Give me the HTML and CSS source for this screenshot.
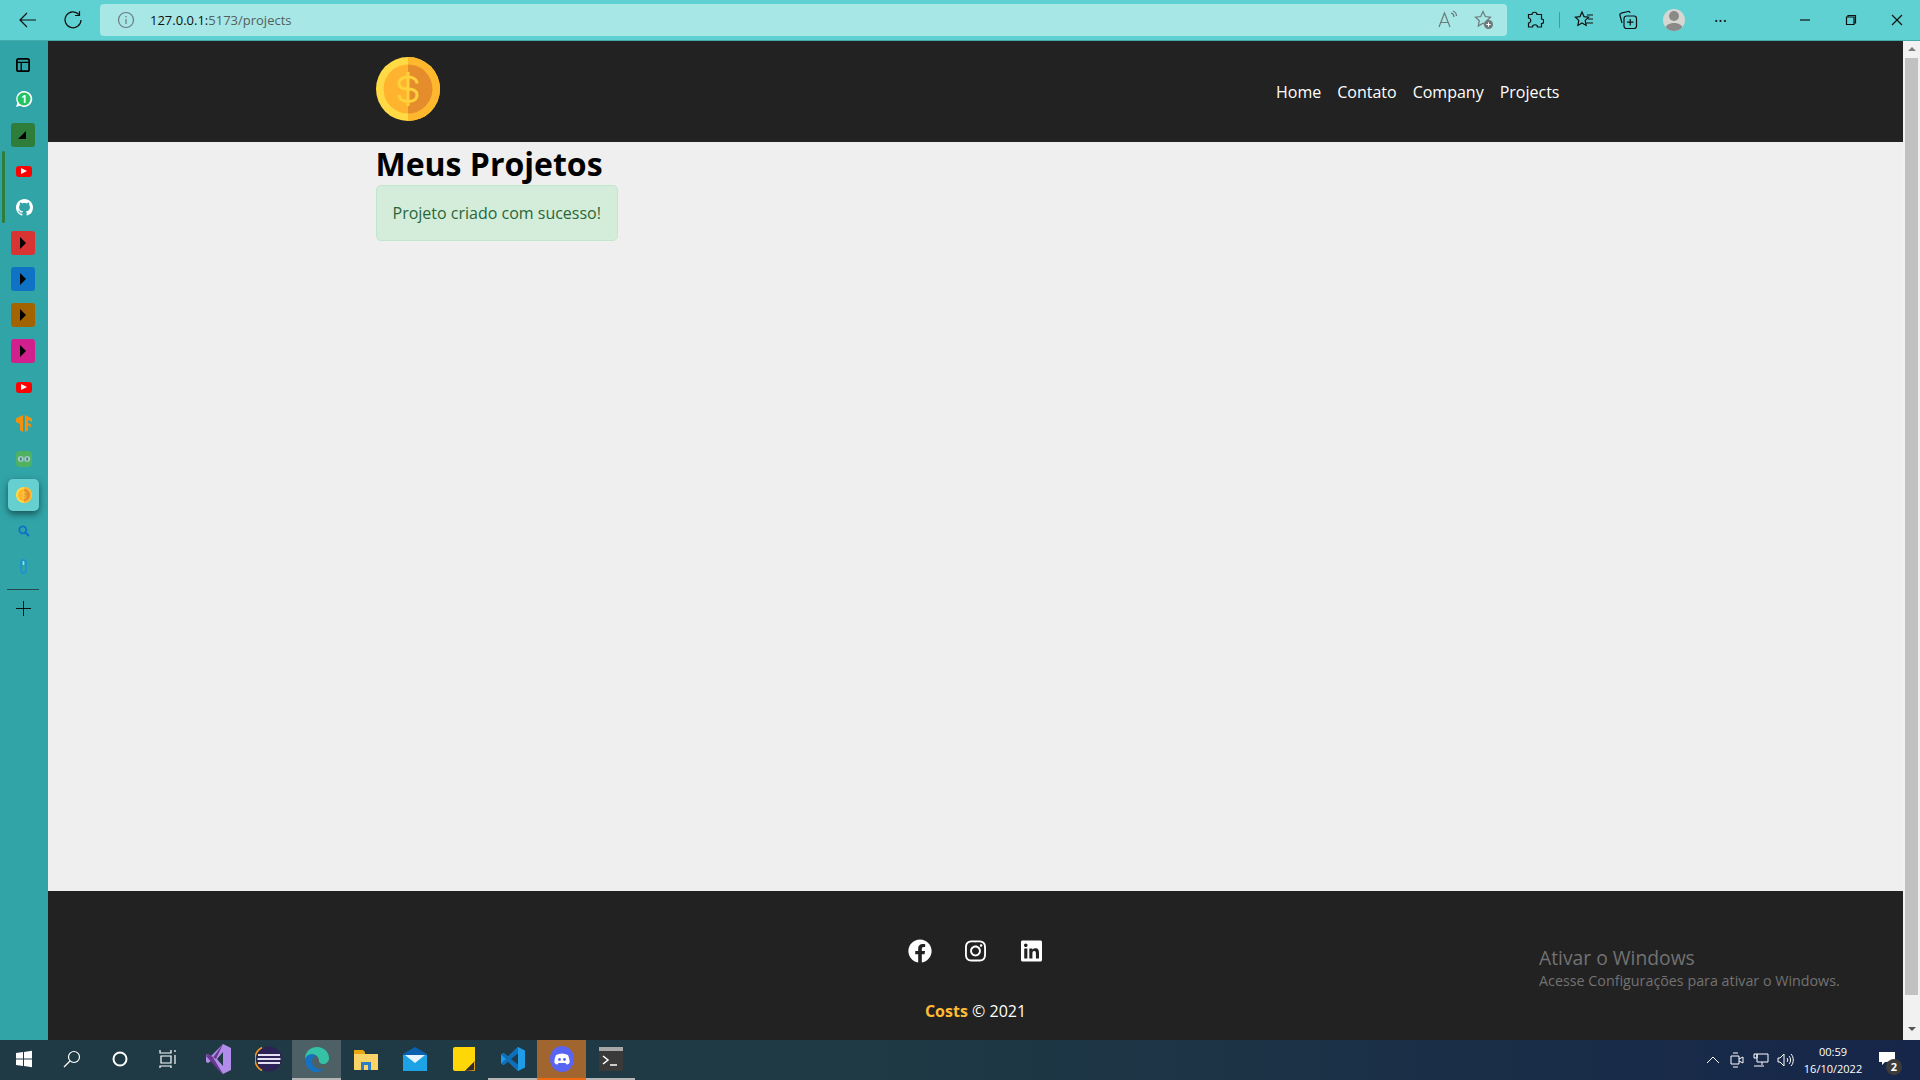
FILE: index.html
```html
<!DOCTYPE html>
<html lang="pt-BR">
<head>
    <meta charset="UTF-8" />
    <title>Costs</title>
    <link rel="stylesheet" href="styles.css">
</head>
<body>
    <div class="toolbar">
        <span class="tb-btn back"><svg width="20" height="20" viewBox="0 0 20 20"><path d="M18 10H2M9 3l-7 7 7 7" class="ln"/></svg></span>
        <span class="tb-btn reload"><svg width="20" height="20" viewBox="0 0 20 20"><path d="M16 4.500A8 8 0 1 0 18 10M16.500 1v4.500H12" class="ln"/></svg></span>
        <div class="address">
            <svg class="info" width="18" height="18" viewBox="0 0 18 18"><circle cx="9" cy="9" r="7.500" class="ln-g"/><path d="M9 8v5M9 5v1.500" class="ln-g"/></svg>
            <span class="url"><span class="host">127.0.0.1:</span>5173/projects</span>
            <span class="addr-end">
                <svg width="20" height="20" viewBox="0 0 20 20"><path d="M1 17L6.500 3 12 17M3 12.500h7M13 3c2 .5 3 2 3 4M15 1c2.500 1 3.500 3 3.500 5" class="ln-g"/></svg>
                <svg width="20" height="20" viewBox="0 0 20 20"><path d="M9 1.500l2.300 5 5.200.6-3.800 3.600 1 5.300L9 13.300 4.300 16l1-5.300L1.500 7.100l5.200-.6z" class="ln-g"/><circle cx="14.500" cy="14.500" r="4.500" fill="#6d7a7b"/><path d="M14.500 12.300v4.400M12.300 14.500h4.400" stroke="#fff" fill="none"/></svg>
            </span>
        </div>
        <div class="tb-right">
            <span class="tb-slot s-ext"><svg width="18" height="18" viewBox="0 0 18 18"><path d="M6 3.500C6 .5 11 .5 11 3.500h4.500V8c3 0 3 4.500 0 4.500V16h-4c0-3-5-3-5 0H2.500v-4c3 0 3-5 0-5V3.500z" class="ln"/></svg></span>
            <span class="tb-sep"></span>
            <span class="tb-slot s-fav"><svg width="20" height="20" viewBox="0 0 20 20"><path d="M8 2l2 4.600 4.600.5-3.400 3.300.9 5L8 13l-4.100 2.400.9-5L1.400 7.100 6 6.600zM13 5h6M14 9h5M12 13h7" class="ln"/></svg></span>
            <span class="tb-slot s-coll"><svg width="20" height="20" viewBox="0 0 20 20"><path d="M4 13L2 5.500c-.3-1 .2-2 1.200-2.300L10 1.500c1-.2 1.800.3 2.200 1.200" class="ln"/><rect x="6" y="6" width="12.500" height="12.500" rx="2.500" class="ln"/><path d="M12.200 9v6.500M9 12.200h6.500" class="ln"/></svg></span>
            <span class="avatar"><svg width="22" height="22" viewBox="0 0 22 22"><circle cx="11" cy="7" r="5" fill="#8a8a88"/><path d="M2 22c0-6 4-8 9-8s9 2 9 8z" fill="#8a8a88"/></svg></span>
            <span class="tb-slot s-more">•••</span>
            <span class="win-btn s-min"><svg width="12" height="12" viewBox="0 0 12 12"><path d="M1 6h10" class="ln"/></svg></span>
            <span class="win-btn s-max"><svg width="12" height="12" viewBox="0 0 12 12"><path d="M3 3V1.500h7.500V9H9M1.500 3H9v7.500H1.500z" class="ln"/></svg></span>
            <span class="win-btn s-close"><svg width="12" height="12" viewBox="0 0 12 12"><path d="M1 1l10 10M11 1L1 11" class="ln"/></svg></span>
        </div>
    </div>

    <div class="middle">
        <aside class="sidebar">
            <span class="active-bar"></span>
            <div class="side-item nudge first"><svg width="14" height="14" viewBox="0 0 16 16"><rect x="1" y="1" width="14" height="14" rx="2" fill="none" stroke="#000" stroke-width="2"/><path d="M1 5h14M6 5v10" stroke="#000" stroke-width="1.500"/></svg></div>
            <div class="side-item"><svg width="18" height="18" viewBox="0 0 18 18"><path d="M1 17l1.300-4A8 8 0 1 1 5 15.800z" fill="#fff"/><circle cx="9" cy="9" r="6.500" fill="#25c35f"/><text x="9" y="12.500" class="wa-num">1</text></svg></div>
            <div class="side-item nudge"><span class="tile green"><svg width="10" height="10" viewBox="0 0 10 10"><path d="M0 9L8 1v8z"/></svg></span></div>
            <div class="side-item"><span class="yt"><svg width="6" height="6" viewBox="0 0 6 6"><path d="M0 0l6 3-6 3z" fill="#fff"/></svg></span></div>
            <div class="side-item"><svg width="17" height="17" viewBox="0 0 16 16"><path fill="#fff" d="M8 0C3.580 0 0 3.580 0 8c0 3.540 2.290 6.530 5.470 7.590.4.070.55-.17.55-.38 0-.19-.01-.82-.01-1.490-2.010.37-2.530-.49-2.690-.94-.09-.23-.48-.94-.82-1.130-.28-.15-.68-.52-.01-.53.630-.01 1.080.58 1.230.82.720 1.210 1.870.870 2.330.660.070-.520.280-.870.510-1.070-1.780-.2-3.640-.89-3.640-3.950 0-.870.310-1.590.820-2.150-.080-.2-.360-1.020.080-2.120 0 0 .670-.210 2.200.820.640-.180 1.320-.270 2-.270s1.360.090 2 .270c1.530-1.040 2.200-.820 2.200-.820.440 1.100.160 1.920.080 2.120.510.560.820 1.270.820 2.150 0 3.070-1.870 3.750-3.650 3.950.290.250.540.730.540 1.480 0 1.070-.010 1.930-.010 2.200 0 .210.150.460.550.380A8.010 8.010 0 0 0 16 8c0-4.420-3.580-8-8-8z"/></svg></div>
            <div class="side-item nudge"><span class="tile red"><svg width="8" height="12" viewBox="0 0 8 12"><path d="M1 0l6 6-6 6z"/></svg></span></div>
            <div class="side-item nudge"><span class="tile blue"><svg width="8" height="12" viewBox="0 0 8 12"><path d="M1 0l6 6-6 6z"/></svg></span></div>
            <div class="side-item nudge"><span class="tile brown"><svg width="8" height="12" viewBox="0 0 8 12"><path d="M1 0l6 6-6 6z"/></svg></span></div>
            <div class="side-item nudge"><span class="tile pink"><svg width="8" height="12" viewBox="0 0 8 12"><path d="M1 0l6 6-6 6z"/></svg></span></div>
            <div class="side-item"><span class="yt"><svg width="6" height="6" viewBox="0 0 6 6"><path d="M0 0l6 3-6 3z" fill="#fff"/></svg></span></div>
            <div class="side-item"><svg width="16" height="17" viewBox="0 0 16 17"><path d="M0 3.500L7 0v17l-3-1.700V9L0 7zM9 0l7 3.500V7l-4-2v3l3 1.500v3L12 10v5.300L9 17z" fill="#f79009"/></svg></div>
            <div class="side-item"><svg width="16" height="16" viewBox="0 0 16 16"><rect width="16" height="16" rx="4" fill="#4eb260"/><circle cx="4.800" cy="8" r="3" fill="#9cc9c4"/><circle cx="11.200" cy="8" r="3" fill="#9cc9c4"/><path d="M4.800 6.500v3M11.200 6.500v3" stroke="#3c6f78" stroke-width="1.400"/></svg></div>
            <div class="side-item"><span class="side-sel">
                <svg width="16" height="16" viewBox="0 0 64 64"><use href="#coin"/></svg>
            </span></div>
            <div class="side-item"><svg width="12" height="12" viewBox="0 0 12 12"><circle cx="4.800" cy="4.800" r="3.500" fill="none" stroke="#1270c4" stroke-width="1.800"/><path d="M7.500 7.500l3.500 3.500" stroke="#1270c4" stroke-width="2"/></svg></div>
            <div class="side-item"><svg width="8" height="16" viewBox="0 0 8 16"><rect x="1" y="1" width="5" height="13" rx="2.500" fill="none" stroke="#1b8fd8" stroke-width="1.500"/><path d="M3.500 2v4" stroke="#9fd8f0" stroke-width="1.500"/></svg></div>
            <span class="side-line"></span>
            <div class="side-plus"><svg width="15" height="15" viewBox="0 0 15 15"><path d="M7.500 0v15M0 7.500h15" stroke="#111" stroke-width="1" fill="none"/></svg></div>
        </aside>

        <div class="page">
            <nav class="navbar">
                <div class="container nav-in">
                    <a class="logo" href="#">
                        <svg width="64" height="64" viewBox="0 0 64 64">
                            <defs>
                                <g id="coin">
                                    <circle cx="32" cy="32" r="32" fill="#ffda44"/>
                                    <path d="M32 0a32 32 0 0 1 0 64z" fill="#ffb82e"/>
                                    <circle cx="32" cy="32" r="24.500" fill="#ffb32e"/>
                                    <path d="M32 7.500a24.500 24.500 0 0 1 0 49z" fill="#e58c2c"/>
                                    <path d="M41 26.500c0-4-4-6.500-9-6.500s-9 2.500-9 6.500 4 5.500 9 5.500 9 1.500 9 6-4 6.500-9 6.500-9-2.500-9-6.500M32 15v34" class="coin-sign"/>
                                </g>
                            </defs>
                            <use href="#coin"/>
                        </svg>
                    </a>
                    <ul class="nav-list">
                        <li><a href="#">Home</a></li>
                        <li><a href="#">Contato</a></li>
                        <li><a href="#">Company</a></li>
                        <li><a href="#">Projects</a></li>
                    </ul>
                </div>
            </nav>
            <main class="content">
                <div class="container">
                    <h1>Meus Projetos</h1>
                    <div class="message">Projeto criado com sucesso!</div>
                </div>
            </main>
            <footer class="footer">
                <ul class="social">
                    <li><svg height="24" viewBox="0 0 512 512"><path d="M504 256C504 119 393 8 256 8S8 119 8 256c0 123.780 90.690 226.380 209.250 245V327.690h-63V256h63v-54.640c0-62.150 37-96.480 93.670-96.480 27.140 0 55.520 4.840 55.520 4.840v61h-31.280c-30.800 0-40.410 19.120-40.410 38.730V256h68.780l-11 71.690h-57.780V501C413.310 482.380 504 379.780 504 256z"/></svg></li>
                    <li><svg height="24" viewBox="0 0 448 512"><path d="M224.100 141c-63.600 0-114.900 51.300-114.900 114.900s51.300 114.900 114.900 114.900S339 319.500 339 255.900 287.700 141 224.100 141zm0 189.600c-41.100 0-74.700-33.500-74.700-74.700s33.500-74.700 74.700-74.700 74.700 33.500 74.700 74.700-33.600 74.700-74.700 74.700zm146.400-194.300c0 14.900-12 26.800-26.800 26.800-14.900 0-26.800-12-26.800-26.800s12-26.800 26.800-26.800 26.800 12 26.800 26.800zm76.100 27.200c-1.700-35.900-9.900-67.700-36.200-93.900-26.200-26.200-58-34.400-93.900-36.200-37-2.100-147.900-2.100-184.900 0-35.800 1.700-67.600 9.900-93.900 36.100s-34.400 58-36.200 93.900c-2.100 37-2.100 147.900 0 184.900 1.700 35.900 9.900 67.700 36.200 93.900s58 34.400 93.900 36.200c37 2.100 147.900 2.100 184.900 0 35.900-1.700 67.700-9.900 93.900-36.200 26.200-26.200 34.400-58 36.200-93.900 2.100-37 2.100-147.800 0-184.800zM398.800 388c-7.800 19.600-22.900 34.700-42.600 42.600-29.500 11.700-99.500 9-132.100 9s-102.700 2.600-132.100-9c-19.600-7.800-34.700-22.900-42.600-42.600-11.700-29.500-9-99.500-9-132.100s-2.600-102.700 9-132.100c7.800-19.600 22.900-34.700 42.600-42.600 29.500-11.700 99.500-9 132.100-9s102.700-2.600 132.100 9c19.600 7.800 34.700 22.900 42.600 42.600 11.700 29.500 9 99.500 9 132.100s2.700 102.700-9 132.100z"/></svg></li>
                    <li><svg height="24" viewBox="0 0 448 512"><path d="M416 32H31.900C14.300 32 0 46.500 0 64.300v383.400C0 465.500 14.300 480 31.900 480H416c17.600 0 32-14.500 32-32.300V64.300c0-17.800-14.400-32.300-32-32.300zM135.400 416H69V202.200h66.500V416zm-33.200-243c-21.300 0-38.500-17.300-38.500-38.500S80.900 96 102.200 96c21.200 0 38.500 17.300 38.500 38.500 0 21.300-17.200 38.500-38.500 38.500zm282.100 243h-66.400V312c0-24.800-.5-56.700-34.500-56.700-34.600 0-39.900 27-39.900 54.900V416h-66.400V202.200h63.700v29.200h.9c8.900-16.800 30.600-34.500 62.900-34.500 67.200 0 79.700 44.300 79.700 101.900V416z"/></svg></li>
                </ul>
                <p class="copy"><span class="brand">Costs</span> &copy; 2021</p>
            </footer>
        </div>

        <div class="scrollbar">
            <span class="arrow-up"></span>
            <span class="thumb"></span>
            <span class="arrow-down"></span>
        </div>

        <div class="watermark">
            <div class="wm-title">Ativar o Windows</div>
            <div class="wm-sub">Acesse Configurações para ativar o Windows.</div>
        </div>
    </div>

    <div class="taskbar">
        <span class="task"><svg width="18" height="18" viewBox="0 0 18 18"><path d="M1 3l7-1v6.500H1zM9 1.900L17 .8v7.700H9zM1 9.500h7V16l-7-1zM9 9.500h8v7.700l-8-1.100z" fill="#fff"/></svg></span>
        <span class="task"><svg width="18" height="18" viewBox="0 0 18 18"><circle cx="11" cy="7" r="5.500" fill="none" stroke="#fff" stroke-width="1.200"/><path d="M7 11l-6 6" stroke="#fff" stroke-width="1.300"/></svg></span>
        <span class="task"><svg width="18" height="18" viewBox="0 0 18 18"><circle cx="9" cy="9" r="6.500" fill="none" stroke="#fff" stroke-width="2"/></svg></span>
        <span class="task"><svg width="18" height="20" viewBox="0 0 18 20"><path d="M1 1v3h11V1M2 7h10v7H2zM1 19v-2h11v2M16 1v2M16 6v9" fill="none" stroke="#fff" stroke-width="1.200"/></svg></span>
        <div class="pinned">
            <span class="task t-pin"><svg width="25" height="30" viewBox="0 0 25 30"><path d="M17 0l8 4v22l-8 4L5 17l-3 2-2-1V11l2-1 3 2z" fill="#b18ce8"/><path d="M17 0L7 13.500 17 30l-2-1L0 12l2-2 8 5z" fill="#68388f"/><path d="M17 8l-6 7 6 7z" fill="#1f3a44"/></svg></span>
            <span class="task t-pin"><svg width="26" height="28" viewBox="0 0 26 28"><circle cx="14" cy="14" r="12.500" fill="#2c2255"/><path d="M7 2.500A13 13 0 0 0 7 25.500" fill="none" stroke="#f7941e" stroke-width="1.500"/><path d="M3 10h22M2.500 14h23M3 18h22" stroke="#e4e0f2" stroke-width="2"/></svg></span>
            <span class="task t-pin t-on"><svg width="26" height="26" viewBox="0 0 26 26"><path d="M1 13C1 5 7 1 13 1c7 0 12 5 12 11 0 4-3 6-6 6-2 0-4-1-4-3 0-6-6-8-10-6-2 1-3 2-4 4z" fill="#35c1a5"/><path d="M1 13c2-5 8-6 11-3-4 1-5 5-3 9 2 4 8 6 12 3-3 3-6 4-9 4-6 0-11-6-11-13z" fill="#1572c2"/></svg></span>
            <span class="task t-pin"><svg width="24" height="22" viewBox="0 0 24 22"><path d="M0 2h9l2 2v3H0z" fill="#e8a812"/><path d="M0 6h24v16H0z" fill="#fbd467"/><path d="M7 14h10v8H7z" fill="#2a7ec8"/><path d="M10 17h4v5h-4z" fill="#fbd467"/></svg></span>
            <span class="task t-pin"><svg width="24" height="24" viewBox="0 0 24 24"><path d="M0 7l12-7 12 7v2H0z" fill="#0a5fae"/><path d="M0 8h24v16H0z" fill="#1da2e6"/><path d="M2 8h20l-10 8z" fill="#e8f4fb"/></svg></span>
            <span class="task t-pin"><svg width="22" height="24" viewBox="0 0 22 24"><path d="M2 0h20v14l-10 10H2a2 2 0 0 1-2-2V2a2 2 0 0 1 2-2z" fill="#ffd606"/><path d="M22 14v9a1 1 0 0 1-1 1h-9z" fill="#e39e14"/><path d="M12 24l9-9v8z" fill="#2d2d2d"/></svg></span>
            <span class="task t-pin t-run"><svg width="24" height="24" viewBox="0 0 24 24"><path d="M17 0l7 3.500v17L17 24 7 14.500l-4.500 3.500L0 16.500v-9L2.500 6 7 9.500z" fill="#1f9be8"/><path d="M17 0L7 9.500 2.500 6 0 7.500 5 12l-5 4.500L2.500 18 7 14.500 17 24z" fill="#0c6fb8"/><path d="M17 6.500L10 12l7 5.500z" fill="#1f3a44"/></svg></span>
            <span class="task t-pin t-disc"><svg width="24" height="26" viewBox="0 0 24 26"><ellipse cx="12" cy="13" rx="12" ry="13" fill="#5865f2"/><path d="M6 9c4-2 8-2 12 0 1 3 2 5 1.500 8-1 1-2 1.500-3 1.500l-1-1.500h-7l-1 1.500c-1 0-2-.5-3-1.500C4 14 5 12 6 9z" fill="#fff"/><circle cx="9.500" cy="13.500" r="1.400" fill="#5865f2"/><circle cx="14.500" cy="13.500" r="1.400" fill="#5865f2"/></svg></span>
            <span class="task t-pin t-run"><svg width="24" height="24" viewBox="0 0 24 24"><rect width="24" height="24" rx="1" fill="#3a3a3a"/><path d="M0 0h24v4H0z" fill="#a8a8a8"/><path d="M4 9l5 4-5 4" fill="none" stroke="#fff" stroke-width="1.500"/><path d="M11 18h7" stroke="#fff" stroke-width="1.500"/></svg></span>
        </div>
        <div class="tray">
            <span class="tray-i"><svg width="14" height="8" viewBox="0 0 14 8"><path d="M1 7l6-6 6 6" fill="none" stroke="#fff"/></svg></span>
            <span class="tray-i"><svg width="14" height="16" viewBox="0 0 14 16"><path d="M3 1h5M3 15h5M1 4h8v8H1zM9 7l4-2v6l-4-2" fill="none" stroke="#fff"/></svg></span>
            <span class="tray-i"><svg width="16" height="14" viewBox="0 0 16 14"><path d="M4 1h11v8H4zM9 9v3M1 13h10M1 1h3v4H1z" fill="none" stroke="#fff"/></svg></span>
            <span class="tray-i"><svg width="17" height="14" viewBox="0 0 17 14"><path d="M1 5h2l4-4v12L3 9H1zM10 5c1 1 1 3 0 4M12 3c2 2 2 6 0 8M14 1c3 3 3 9 0 12" fill="none" stroke="#fff"/></svg></span>
            <span class="clock"><span>00:59</span><span>16/10/2022</span></span>
            <span class="notif">
                <svg width="16" height="13" viewBox="0 0 16 13"><path d="M0 0h16v10H6l-3 3v-3H0z" fill="#fff"/></svg>
                <span class="badge">2</span>
            </span>
        </div>
    </div>
</body>
</html>
```

FILE: styles.css
```css
* {
    box-sizing: border-box;
}
html, body {
    height: 100%;
}
body {
    margin: 0;
    display: flex;
    flex-direction: column;
    overflow: hidden;
    font-family: "Open Sans", sans-serif;
    background-color: #222;
}
svg {
    display: block;
}
.ln {
    fill: none;
    stroke: #111;
    stroke-width: 1.2;
}
.ln-g {
    fill: none;
    stroke: #6d7a7b;
    stroke-width: 1.2;
}

/* barra do navegador */
.toolbar {
    height: 41px;
    flex: none;
    display: flex;
    align-items: center;
    background-color: #5fd1d2;
    border-bottom: 1px solid #45a9ab;
    padding-left: 18px;
}
.tb-btn {
    width: 20px;
    margin-right: 25px;
}
.reload {
    margin-right: 17px;
}
.address {
    width: 1407px;
    height: 32px;
    background-color: #a7e7e6;
    border-radius: 4px;
    display: flex;
    align-items: center;
    padding-left: 17px;
}
.url {
    margin-left: 15px;
    font-size: 13px;
    color: #555f60;
    white-space: nowrap;
}
.host {
    color: #111;
}
.addr-end {
    margin-left: auto;
    display: flex;
    gap: 16px;
    padding-right: 13px;
}
.tb-right {
    flex: 1;
    display: flex;
    align-items: center;
}
.tb-slot {
    display: flex;
    justify-content: center;
}
.s-ext {
    width: 20px;
    margin-left: 18px;
}
.tb-sep {
    width: 1px;
    height: 16px;
    background-color: #4a9a9c;
    margin: 0 14px;
}
.s-fav {
    width: 20px;
    margin-right: 24px;
}
.s-coll {
    width: 20px;
    margin-right: 25px;
}
.avatar {
    width: 22px;
    height: 22px;
    border-radius: 50%;
    background-color: #d6d6d3;
    overflow: hidden;
}
.s-more {
    width: 20px;
    margin-left: 26px;
    font-size: 9px;
    letter-spacing: 1px;
    color: #111;
}
.win-btn {
    width: 12px;
}
.s-min {
    margin-left: 68px;
}
.s-max {
    margin-left: 34px;
}
.s-close {
    margin-left: 34px;
}

.middle {
    flex: 1;
    display: flex;
    position: relative;
    min-height: 0;
}

/* barra lateral */
.sidebar {
    width: 48px;
    flex: none;
    background-color: #31a4a8;
    position: relative;
    padding-top: 4px;
    display: flex;
    flex-direction: column;
    align-items: center;
}
.active-bar {
    position: absolute;
    left: 2px;
    top: 110px;
    width: 3px;
    height: 72px;
    border-radius: 2px;
    background-color: #2e7d3a;
}
.side-item {
    height: 36px;
    flex: none;
    display: flex;
    align-items: center;
    justify-content: center;
}
.first {
    padding-top: 4px;
}
.nudge {
    margin-right: 2px;
}
.tile {
    width: 24px;
    height: 24px;
    border-radius: 3px;
    display: flex;
    align-items: center;
    justify-content: center;
}
.green { background-color: #2e7d3a; }
.red { background-color: #d93333; }
.blue { background-color: #0f72c4; }
.brown { background-color: #a36400; }
.pink { background-color: #d1208e; }
.yt {
    width: 16px;
    height: 11px;
    border-radius: 3px;
    background-color: #f00;
    display: flex;
    align-items: center;
    justify-content: center;
}
.wa-num {
    font-family: "Open Sans", sans-serif;
    font-size: 10px;
    font-weight: 700;
    fill: #fff;
    text-anchor: middle;
}
.side-sel {
    width: 31px;
    height: 32px;
    margin-right: 1px;
    border-radius: 5px;
    background-color: #66d0d0;
    box-shadow: 0 3px 7px rgba(0, 0, 0, 0.5);
    display: flex;
    align-items: center;
    justify-content: center;
}
.side-line {
    width: 32px;
    height: 1px;
    margin-top: 4px;
    margin-right: 2px;
    background-color: #24484c;
}
.side-plus {
    margin-top: 11px;
    margin-right: 2px;
}

/* pagina */
.page {
    flex: 1;
    min-width: 0;
    display: flex;
    flex-direction: column;
}
.container {
    width: 1200px;
    margin: 0 auto;
}
.navbar {
    height: 101px;
    flex: none;
    background-color: #222;
    padding-top: 16px;
}
.nav-in {
    display: flex;
    justify-content: space-between;
}
.logo {
    display: block;
}
.nav-list {
    list-style: none;
    margin: 0;
    padding: 0;
    display: flex;
    height: 69px;
    align-items: center;
}
.nav-list li {
    margin-right: 16px;
}
.nav-list a {
    color: #fff;
    text-decoration: none;
    font-size: 16px;
}
.coin-sign {
    fill: none;
    stroke: #ffd23c;
    stroke-width: 3;
}
.content {
    flex: 1;
    background-color: #efefef;
}
.content h1 {
    margin: 0;
    font-size: 32px;
    font-weight: 700;
    color: #000;
}
.message {
    width: fit-content;
    padding: 16px;
    background-color: #d4edda;
    border: 1px solid #c3e6cb;
    border-radius: 5px;
    color: #2a6638;
    font-size: 16px;
}
.footer {
    height: 149px;
    flex: none;
    background-color: #222;
    color: #fff;
    padding-top: 48px;
    text-align: center;
}
.social {
    list-style: none;
    margin: 0;
    padding: 0;
    display: flex;
    justify-content: center;
}
.social li {
    width: 56px;
    display: flex;
    justify-content: center;
}
.social svg {
    fill: #fff;
}
.copy {
    margin: 37px 0 0;
    font-size: 16px;
}
.brand {
    color: #ffbb33;
    font-weight: 700;
}

/* barra de rolagem */
.scrollbar {
    width: 17px;
    flex: none;
    background-color: #f1f1f1;
    display: flex;
    flex-direction: column;
    align-items: center;
    padding-top: 6px;
}
.thumb {
    width: 13px;
    height: 937px;
    margin-top: 7px;
    background-color: #c1c1c1;
}
.arrow-up {
    border: 4px solid transparent;
    border-top: 0;
    border-bottom: 4px solid #7d7d7d;
}
.arrow-down {
    margin-top: 32px;
    border: 4px solid transparent;
    border-bottom: 0;
    border-top: 4px solid #555;
}

/* marca d'agua sobre a pagina */
.watermark {
    position: absolute;
    left: 1539px;
    top: 904px;
    color: #727272;
}
.wm-title {
    font-size: 19.300px;
    line-height: 26px;
}
.wm-sub {
    font-size: 14.300px;
    line-height: 19px;
}

/* barra de tarefas */
.taskbar {
    height: 40px;
    flex: none;
    display: flex;
    align-items: stretch;
    background: linear-gradient(90deg, #1f3a44, #1f3a44 45%, #16264a);
}
.task {
    width: 48px;
    display: flex;
    align-items: center;
    justify-content: center;
    border-bottom: 2px solid transparent;
}
.pinned {
    display: flex;
    margin-left: 2px;
}
.t-pin {
    width: 49px;
}
.t-on {
    background-color: #4d6066;
    border-bottom-color: #b5b5b5;
}
.t-run {
    border-bottom-color: #b5b5b5;
}
.t-disc {
    background-color: #a1652f;
    border-bottom-color: #f26a0f;
}
.tray {
    margin-left: auto;
    display: flex;
    align-items: center;
    padding-right: 17px;
    color: #fff;
}
.tray-i {
    width: 24px;
    display: flex;
    justify-content: center;
}
.clock {
    width: 70px;
    margin-left: 1px;
    display: flex;
    flex-direction: column;
    align-items: center;
    font-size: 11px;
    line-height: 17px;
}
.notif {
    position: relative;
    margin-left: 11px;
    width: 24px;
    height: 24px;
    padding-top: 4px;
}
.badge {
    position: absolute;
    left: 7px;
    top: 11px;
    width: 16px;
    height: 16px;
    border-radius: 50%;
    background-color: #3c3c3c;
    font-size: 11px;
    font-weight: 700;
    line-height: 16px;
    text-align: center;
}
```
